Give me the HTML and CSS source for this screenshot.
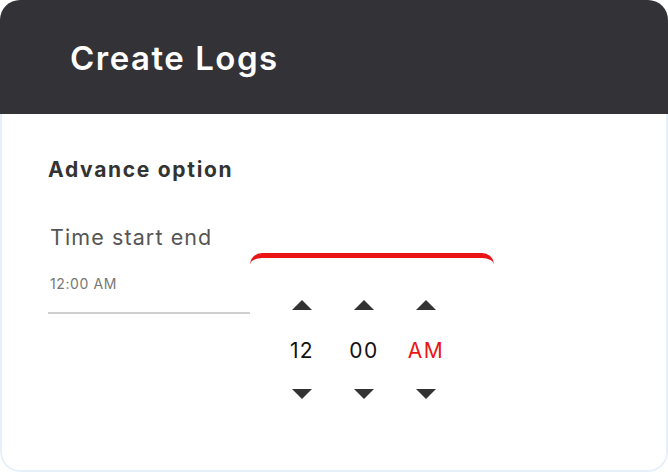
FILE: index.html
```html
<!DOCTYPE html>
<html>
<head>
<meta charset="utf-8">
<link rel="stylesheet" href="styles.css">
</head>
<body>
<div class="card">
  <header class="card-header">
    <h1 class="title">Create Logs</h1>
  </header>
  <section class="card-body">
    <h2 class="section-title">Advance option</h2>
    <div class="time-row">
      <div class="field">
        <div class="field-label">Time start end</div>
        <div class="field-value">12:00 AM</div>
      </div>
      <div class="picker">
        <div class="picker-col">
          <span class="arrow arrow-up"></span>
          <span class="picker-val">12</span>
          <span class="arrow arrow-down"></span>
        </div>
        <div class="picker-col">
          <span class="arrow arrow-up"></span>
          <span class="picker-val">00</span>
          <span class="arrow arrow-down"></span>
        </div>
        <div class="picker-col">
          <span class="arrow arrow-up"></span>
          <span class="picker-val picker-ampm">AM</span>
          <span class="arrow arrow-down"></span>
        </div>
      </div>
    </div>
  </section>
</div>
</body>
</html>
```
FILE: styles.css
```css
* { box-sizing: border-box; }
html, body { margin: 0; padding: 0; background: #ffffff; }
body { font-family: "Inter", "Noto Sans", sans-serif; }

.card {
  width: 668px;
  height: 472px;
  display: flex;
  flex-direction: column;
  border-radius: 20px;
  overflow: hidden;
  background: #fff;
}

.card-header {
  height: 114px;
  background: #323237;
  display: flex;
  align-items: center;
  padding-left: 70px;
  flex-shrink: 0;
}

.title {
  margin: 0;
  color: #fff;
  font-size: 33px;
  font-weight: 600;
  letter-spacing: 1.5px;
  padding-top: 2px;
}

.card-body {
  flex: 1;
  border: 2px solid #e6f0fa;
  border-top: none;
  border-radius: 0 0 20px 20px;
  padding: 44px 0 0 46px;
}

.section-title {
  margin: 0;
  font-size: 21px;
  font-weight: 700;
  color: #333333;
  line-height: 24px;
  letter-spacing: 1.7px;
}

.time-row {
  display: flex;
  margin-top: 42px;
}

.field {
  width: 202px;
  border-bottom: 2px solid #cfcfcf;
  height: 90px;
  padding-left: 2px;
}

.field-label {
  font-size: 21.5px;
  color: #555555;
  line-height: 26px;
  letter-spacing: 1.1px;
}

.field-value {
  margin-top: 26px;
  font-size: 14px;
  color: #777777;
  line-height: 16px;
  letter-spacing: 0.6px;
}

.picker {
  margin-top: 29px;
  width: 244px;
  height: 160px;
  border-top: 5px solid #ea1414;
  border-radius: 12px 12px 0 0;
  display: flex;
  padding: 42px 0 0 32px;
  gap: 22px;
  align-self: flex-start;
}

.picker-col {
  width: 40px;
  display: flex;
  flex-direction: column;
  align-items: center;
}

.arrow {
  width: 0;
  height: 0;
  border-left: 10px solid transparent;
  border-right: 10px solid transparent;
}
.arrow-up { border-bottom: 10px solid #333333; }
.arrow-down { border-top: 10px solid #333333; }

.picker-val {
  margin: 29px 0 26px;
  font-size: 21px;
  line-height: 24px;
  color: #111111;
  letter-spacing: 1.4px;
}
.picker-ampm { color: #ea1414; }
```
